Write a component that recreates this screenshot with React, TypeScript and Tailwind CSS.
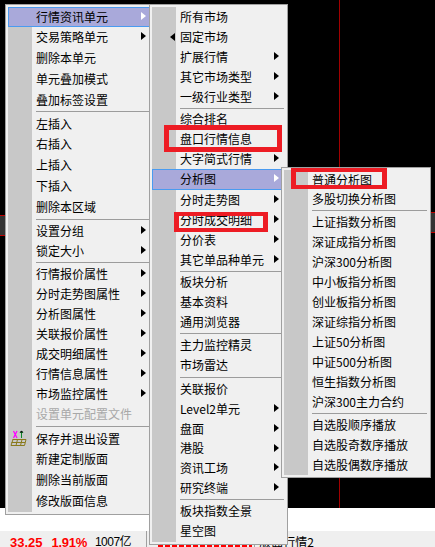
import React from 'react';

const FONT = 'font-["Noto_Sans_CJK_SC","Liberation_Sans",sans-serif]';
const NUM = 'font-["Liberation_Sans","Noto_Sans_CJK_SC",sans-serif]';

type Item = {
  label?: string;
  arrow?: boolean;
  active?: boolean;
  disabled?: boolean;
  back?: boolean;
  icon?: boolean;
  h: string;
};

const r = (label: string, h: string, extra: Partial<Item> = {}): Item => ({ label, h, ...extra });
const sep = (h: string): Item => ({ h });

const menu1: Item[] = [
  r('行情资讯单元', 'h-[20px]', { arrow: true, active: true }),
  r('交易策略单元', 'h-[20.5px]', { arrow: true }),
  r('删除本单元', 'h-[20.5px]'),
  r('单元叠加模式', 'h-[21px]'),
  r('叠加标签设置', 'h-[21px]'),
  sep('h-[3px]'),
  r('左插入', 'h-[21px]'),
  r('右插入', 'h-[20.5px]'),
  r('上插入', 'h-[21px]'),
  r('下插入', 'h-[21px]'),
  r('删除本区域', 'h-[21px]'),
  sep('h-[3px]'),
  r('设置分组', 'h-[20px]', { arrow: true }),
  r('锁定大小', 'h-[20px]', { arrow: true }),
  sep('h-[3px]'),
  r('行情报价属性', 'h-[20px]', { arrow: true }),
  r('分时走势图属性', 'h-[20px]', { arrow: true }),
  r('分析图属性', 'h-[20px]', { arrow: true }),
  r('关联报价属性', 'h-[20px]', { arrow: true }),
  r('成交明细属性', 'h-[20px]', { arrow: true }),
  r('行情信息属性', 'h-[20px]', { arrow: true }),
  r('市场监控属性', 'h-[20px]', { arrow: true }),
  r('设置单元配置文件', 'h-[20px]', { disabled: true }),
  sep('h-[5px]'),
  r('保存并退出设置', 'h-[20.5px]', { icon: true }),
  r('新建定制版面', 'h-[20.5px]'),
  r('删除当前版面', 'h-[21px]'),
  r('修改版面信息', 'h-[21px]'),
];

const menu2: Item[] = [
  r('所有市场', 'h-[20px]'),
  r('固定市场', 'h-[20px]', { back: true }),
  r('扩展行情', 'h-[20px]', { arrow: true }),
  r('其它市场类型', 'h-[20px]', { arrow: true }),
  r('一级行业类型', 'h-[20px]', { arrow: true }),
  sep('h-[2px]'),
  r('综合排名', 'h-[20.15px]'),
  r('盘口行情信息', 'h-[20.15px]'),
  r('大字简式行情', 'h-[20.15px]', { arrow: true }),
  r('分析图', 'h-[20.15px]', { arrow: true, active: true }),
  r('分时走势图', 'h-[20.15px]', { arrow: true }),
  r('分时成交明细', 'h-[20.15px]', { arrow: true }),
  r('分价表', 'h-[20.15px]', { arrow: true }),
  r('其它单品种单元', 'h-[20.15px]', { arrow: true }),
  sep('h-[2px]'),
  r('板块分析', 'h-[20px]'),
  r('基本资料', 'h-[20px]'),
  r('通用浏览器', 'h-[20px]'),
  sep('h-[3px]'),
  r('主力监控精灵', 'h-[20px]'),
  r('市场雷达', 'h-[20px]'),
  sep('h-[4px]'),
  r('关联报价', 'h-[19.8px]'),
  r('Level2单元', 'h-[19.8px]', { arrow: true }),
  r('盘面', 'h-[19.8px]', { arrow: true }),
  r('港股', 'h-[19.8px]', { arrow: true }),
  r('资讯工场', 'h-[19.8px]', { arrow: true }),
  r('研究终端', 'h-[19.8px]', { arrow: true }),
  sep('h-[3px]'),
  r('板块指数全景', 'h-[20px]'),
  r('星空图', 'h-[20px]'),
];

const menu3: Item[] = [
  r('普通分析图', 'h-[19px]'),
  r('多股切换分析图', 'h-[20px]'),
  sep('h-[3px]'),
  r('上证指数分析图', 'h-[20px]'),
  r('深证成指分析图', 'h-[20px]'),
  r('沪深300分析图', 'h-[20px]'),
  r('中小板指分析图', 'h-[20px]'),
  r('创业板指分析图', 'h-[20px]'),
  r('深证综指分析图', 'h-[20px]'),
  r('上证50分析图', 'h-[20px]'),
  r('中证500分析图', 'h-[20px]'),
  r('恒生指数分析图', 'h-[20px]'),
  r('沪深300主力合约', 'h-[20px]'),
  sep('h-[3px]'),
  r('自选股顺序播放', 'h-[20px]'),
  r('自选股奇数序播放', 'h-[20px]'),
  r('自选股偶数序播放', 'h-[20px]'),
];

const SaveIcon = () => (
  <svg width="24" height="24" viewBox="0 0 24 24" className="absolute bottom-[60px] left-0">
    <path d="M5.5 3l3.5 7M9 3l-3.5 7" stroke="#f0f" strokeWidth="1.3" fill="none" />
    <path d="M13 5h1v5h-1z" fill="#0a8a2a" />
    <path d="M13.5 2.5l2 2.5h-4z" fill="#0a6a20" />
    <path d="M12.5 3h2v1.5h-2z" fill="#111" />
    <path
      d="M4.5 11.5h13.5M3.5 14.5h13.5M3 17.5h13.5M5 11.5l-2 6M9.5 11.5l-1.5 6M14 11.5l-1.5 6M18 11.5l-1.5 6"
      stroke="#8a7a1c"
      strokeWidth="1"
      fill="none"
    />
  </svg>
);

const Row = ({ item }: { item: Item }) => {
  if (!item.label) {
    return (
      <div className={`${item.h} flex items-center pl-[4px] pr-[3px]`}>
        <div className="h-px w-full bg-[#9c9c9c]" />
      </div>
    );
  }
  return (
    <div
      className={`${item.h} relative flex items-center pl-[4px] text-[12px] leading-none ${
        item.active ? 'z-10 -ml-[24px] bg-[#a9a9da] pl-[28px] outline outline-1 -outline-offset-1 outline-[#4a9bf0]' : ''
      } ${item.disabled ? 'text-[#a8a8a8]' : 'text-black'}`}
    >
      {item.back && (
        <span className="absolute -left-[6px] top-[6px] h-0 w-0 border-y-[4px] border-r-[5px] border-y-transparent border-r-black" />
      )}
      <span className="whitespace-nowrap">{item.label}</span>
      {item.arrow && (
        <span
          className={`absolute right-[8px] top-[5px] h-0 w-0 border-y-[4px] border-l-[5px] border-y-transparent ${
            item.active ? 'border-l-white' : 'border-l-black'
          }`}
        />
      )}
    </div>
  );
};

const Menu = ({ items, className }: { items: Item[]; className: string }) => (
  <div className={`absolute isolate flex border border-[#a0a0a0] bg-[#f0f0f0] p-[2px] pr-0 ${className}`}>
    <div className="relative w-[24px] shrink-0 bg-[#c8c8c8]">{items.some((i) => i.icon) && <SaveIcon />}</div>
    <div className="flex min-w-0 flex-1 flex-col">
      {items.map((item, i) => (
        <Row key={i} item={item} />
      ))}
    </div>
  </div>
);

const RedBox = ({ className }: { className: string }) => (
  <div className={`absolute z-20 border-[#ed1c24] ${className}`} />
);

export default function App() {
  return (
    <div className={`relative h-[547px] w-[435px] overflow-hidden bg-[#efefef] ${FONT}`}>
      {/* chart area */}
      <div className="relative h-[508px] bg-black">
        <div className="absolute bottom-0 left-[339px] top-0 w-px bg-[#a00000]" />
        <div className="absolute left-0 top-[215px] h-[21px] w-[10px] border-y border-[#c00000] bg-[#333333]" />
        <div className="absolute right-0 top-[212px] h-[21px] w-[10px] border-y border-[#c00000] bg-[#333333]" />
      </div>
      <div className="h-[23px] bg-white" />

      {/* status bar */}
      <div className="flex h-[16px] pl-[10px] leading-[9px]">
        <span className={`${NUM} pt-[7px] text-[13px] font-bold text-[#ff0000]`}>33.25</span>
        <span className={`${NUM} ml-[9px] pt-[7px] text-[13px] font-bold tracking-[-0.3px] text-[#ff0000]`}>1.91%</span>
        <span className={`${NUM} ml-[8px] pt-[7px] text-[12px] tracking-[-0.5px] text-black`}>1007亿</span>
        <div className="ml-[15px] w-px bg-[#a0a0a0]" />
        <div className="flex w-[107px] flex-col justify-end pl-[11px] pr-[2px]">
          <div className="h-[2px] bg-[repeating-linear-gradient(90deg,#ff0000,#ff0000_5px,transparent_5px,transparent_7px)]" />
        </div>
        <div className="w-px bg-[#a0a0a0]" />
        <span className="ml-[4px] pt-[6px] text-[12px] text-black">版面行情2</span>
      </div>

      <Menu items={menu1} className="left-[5px] top-[4px] h-[511px] w-[150px]" />
      <Menu items={menu2} className="left-[149px] top-[4px] h-[541px] w-[139px]" />
      <Menu items={menu3} className="left-[281px] top-[167px] h-[311px] w-[150px]" />

      <RedBox className="left-[164px] top-[125px] h-[27px] w-[118px] border-[5px]" />
      <RedBox className="left-[174px] top-[212px] h-[20px] w-[94px] border-x-[5px] border-y-[4px]" />
      <RedBox className="left-[291px] top-[168px] h-[21px] w-[96px] border-x-[5px] border-y-[4px]" />
    </div>
  );
}
